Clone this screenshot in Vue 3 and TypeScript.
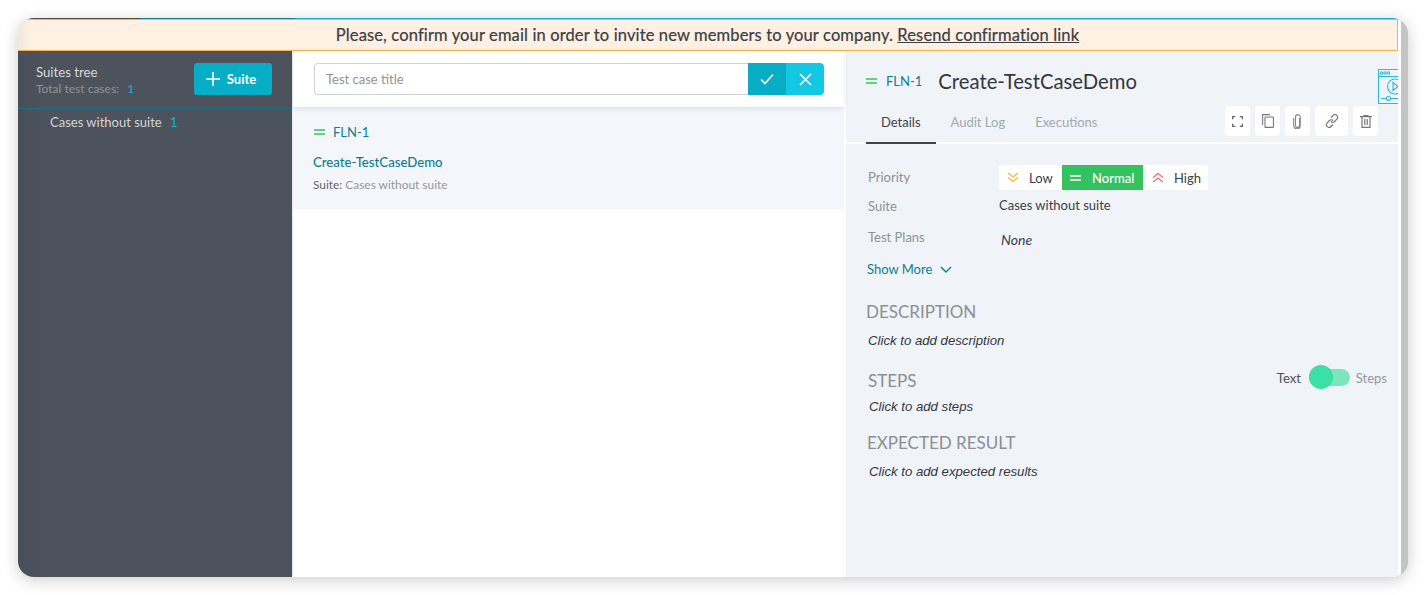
<script setup lang="ts">
const priorities = [
  { label: 'Low', cls: 'low' },
  { label: 'Normal', cls: 'normal' },
  { label: 'High', cls: 'high' },
]
const tabs = ['Details', 'Audit Log', 'Executions']
</script>

<template>
  <div class="page">
    <div class="window">
      <div class="main">
        <div class="topline"></div>
        <div class="banner">
          Please, confirm your email in order to invite new members to your company.
          <u>Resend confirmation link</u>
        </div>
        <div class="body">
          <aside class="sidebar">
            <div class="side-head">
              <div>
                <div class="side-title">Suites tree</div>
                <div class="side-total">Total test cases: <span class="cyan">1</span></div>
              </div>
              <button class="add-btn">
                <svg width="14" height="14" viewBox="0 0 14 14"><path d="M7 0v14M0 7h14" stroke="#fff" stroke-width="1.6" /></svg>
                Suite
              </button>
            </div>
            <div class="side-item">Cases without suite <span class="cyan">1</span></div>
          </aside>

          <section class="middle">
            <div class="search-bar">
              <div class="search-input">Test case title</div>
              <button class="ok">
                <svg width="14" height="12" viewBox="0 0 14 12"><path d="M1 6.5 5 10.5 13 1.5" fill="none" stroke="#fff" stroke-width="1.6" /></svg>
              </button>
              <button class="cancel">
                <svg width="13" height="13" viewBox="0 0 13 13"><path d="M1 1l11 11M12 1 1 12" stroke="#fff" stroke-width="1.7" /></svg>
              </button>
            </div>
            <div class="case-card">
              <div class="case-id">
                <svg class="eq" width="11" height="6" viewBox="0 0 11 6"><path d="M0 1h11M0 5h11" stroke="#34c759" stroke-width="1.5" /></svg>
                FLN-1
              </div>
              <div class="case-name">Create-TestCaseDemo</div>
              <div class="case-suite"><span>Suite:</span> Cases without suite</div>
            </div>
          </section>

          <section class="detail">
            <div class="detail-head">
              <svg class="eq" width="11" height="6" viewBox="0 0 11 6"><path d="M0 1h11M0 5h11" stroke="#34c759" stroke-width="1.5" /></svg>
              <span class="detail-id">FLN-1</span>
              <h1>Create-TestCaseDemo</h1>
              <svg class="tutorial" width="20" height="35" viewBox="0 0 20 35" fill="none" stroke="#2bbcd6" stroke-width="1.1">
                <path d="M20 .5H.5v34H20M.5 7.5H20" />
                <circle cx="3.5" cy="4" r="1.2" /><circle cx="7" cy="4" r="1.2" /><circle cx="10.5" cy="4" r="1.2" />
                <circle cx="17" cy="17.5" r="7.5" />
                <path d="M15 13.5v8l5-4z" />
                <path d="M3 29.5h6M12 29.5h8" /><circle cx="10.5" cy="29.5" r="2" />
              </svg>
            </div>
            <div class="tab-row">
              <div class="tabs">
                <div v-for="(t, i) in tabs" :key="t" class="tab" :class="{ active: i === 0 }">{{ t }}</div>
              </div>
              <div class="tools">
                <button class="tool w25">
                  <svg width="11" height="11" viewBox="0 0 12 12" fill="none" stroke="#666" stroke-width="1.5"><path d="M.7 3.5V.7h2.8M8.5.7h2.8v2.8M11.3 8.5v2.8H8.5M3.5 11.3H.7V8.5" /></svg>
                </button>
                <button class="tool w25">
                  <svg width="12" height="14" viewBox="0 0 12 14" fill="none" stroke="#777" stroke-width="1.1"><path d="M.6 11V.6H8" /><rect x="3" y="3" width="8.4" height="10.4" rx=".5" /></svg>
                </button>
                <button class="tool w25">
                  <svg width="9" height="15" viewBox="0 0 9 15" fill="none" stroke="#888" stroke-width="1.1"><path d="M6.5 4v7.5a2 2 0 0 1-4 0V3a2.4 2.4 0 0 1 4.8 0v8.5a3.3 3.3 0 0 1-6.6 0V4" /></svg>
                </button>
                <button class="tool w33">
                  <svg width="14" height="14" viewBox="0 0 14 14" fill="none" stroke="#777" stroke-width="1.2"><path d="M6 3.5 8 1.5a2.6 2.6 0 0 1 3.9 3.6L9.6 7.5a2.6 2.6 0 0 1-3.7 0" /><path d="M8 10.5 6 12.5a2.6 2.6 0 0 1-3.9-3.6L4.4 6.5a2.6 2.6 0 0 1 3.7 0" /></svg>
                </button>
                <button class="tool w25">
                  <svg width="12" height="13" viewBox="0 0 12 13" fill="none" stroke="#777" stroke-width="1.2"><path d="M0 1.6h12M4 1.6V.6h4v1M2 1.6v10.8h8V1.6M4.8 4v6M7.2 4v6" /></svg>
                </button>
              </div>
            </div>

            <div class="fields">
              <div class="field priority-row">
                <div class="label">Priority</div>
                <div class="prio-group">
                  <div v-for="p in priorities" :key="p.label" class="prio" :class="p.cls">
                    <svg v-if="p.cls === 'low'" width="12" height="11" viewBox="0 0 12 11" fill="none" stroke="#f5b83d" stroke-width="1.3"><path d="M1 1l5 4 5-4M1 5.5l5 4 5-4" /></svg>
                    <svg v-else-if="p.cls === 'normal'" width="11" height="6" viewBox="0 0 11 6"><path d="M0 1h11M0 5h11" stroke="#fff" stroke-width="1.5" /></svg>
                    <svg v-else width="12" height="11" viewBox="0 0 12 11" fill="none" stroke="#f76b6b" stroke-width="1.3"><path d="M1 5.5l5-4 5 4M1 10l5-4 5 4" /></svg>
                    <span>{{ p.label }}</span>
                  </div>
                </div>
              </div>
              <div class="field suite-row">
                <div class="label">Suite</div>
                <div class="value">Cases without suite</div>
              </div>
              <div class="field plans-row">
                <div class="label">Test Plans</div>
                <div class="value none">None</div>
              </div>
            </div>
            <div class="show-more">
              Show More
              <svg width="12" height="7" viewBox="0 0 12 7" fill="none" stroke="#0a7f93" stroke-width="1.4"><path d="M1 1l5 5 5-5" /></svg>
            </div>

            <h2 class="desc-h">DESCRIPTION</h2>
            <p class="hint desc-p">Click to add description</p>
            <div class="steps-head">
              <h2>STEPS</h2>
              <div class="switch-wrap">
                <span class="sw-on">Text</span>
                <span class="switch"><span class="knob"></span></span>
                <span class="sw-off">Steps</span>
              </div>
            </div>
            <p class="hint steps-p">Click to add steps</p>
            <h2 class="exp-h">EXPECTED RESULT</h2>
            <p class="hint exp-p">Click to add expected results</p>
          </section>
        </div>
      </div>
      <div class="gutter"></div>
    </div>
  </div>
</template>

<style>
html, body { margin: 0; background: #fff; }
</style>

<style scoped>
* { box-sizing: border-box; }
.page {
  width: 1426px;
  height: 595px;
  padding: 18px;
  overflow: hidden;
  font-family: Lato, "Liberation Sans", sans-serif;
}
.window {
  width: 1390px;
  height: 559px;
  display: flex;
  border-radius: 16px;
  overflow: hidden;
  box-shadow: 0 3px 16px rgba(0, 0, 0, 0.2);
  background: #c6c6c6;
}
.main {
  width: 1383px;
  display: flex;
  flex-direction: column;
  background: #fff;
  padding-right: 3px;
}
.gutter { width: 7px; background: #c4c4c4; }
.topline {
  height: 1px;
  flex: none;
  background: linear-gradient(90deg, #5a4a42 0 122px, #167f92 122px 277px, #12b5cf 277px);
}
.banner {
  height: 32px;
  flex: none;
  background: linear-gradient(90deg, #efe8de, #fef0e2 14px);
  border-top: 1px solid #f8b24b;
  border-bottom: 1.5px solid #f8b24b;
  border-right: 1.5px solid #f8b24b;
  text-align: center;
  font-size: 16.5px;
  line-height: 30px;
  color: #3a3e44;
  letter-spacing: 0.13px;
  -webkit-text-stroke: 0.2px #3a3e44;
}
.body { flex: 1; display: flex; min-height: 0; }
.sidebar {
  width: 274px;
  flex: none;
  background: linear-gradient(90deg, #484f59, #4c535d 30px);
  color: #d4d6d9;
}
.side-head {
  height: 58px;
  display: flex;
  justify-content: space-between;
  padding: 12px 20px 0 18px;
  border-bottom: 1px solid #1b6f7e;
}
.side-title { font-size: 13.2px; line-height: 18px; color: #d8dadc; }
.side-total { font-size: 12px; line-height: 16px; color: #8e939a; }
.cyan { color: #0fb6d0; margin-left: 5px; }
.add-btn {
  width: 78px;
  height: 32px;
  border: 0;
  border-radius: 3px;
  background: #06adc5;
  color: #fff;
  font: 700 13px Lato, sans-serif;
  display: flex;
  align-items: center;
  justify-content: center;
  gap: 7px;
  padding: 0 4px 0 0;
}
.side-item { padding: 4px 0 0 32px; font-size: 13px; line-height: 18px; color: #d2d4d7; }
.middle {
  width: 552px;
  flex: none;
  background: #fff;
  border-left: 1px solid #e6e9ee;
}
.search-bar {
  height: 56px;
  padding: 12px 20px 0 21px;
  display: flex;
  box-shadow: 0 2px 5px rgba(70, 90, 120, 0.14);
  position: relative;
}
.search-input {
  width: 434px;
  height: 32px;
  border: 1px solid #d0d2d4;
  border-right: 0;
  border-radius: 4px 0 0 4px;
  padding-left: 11px;
  font-size: 13px;
  line-height: 30px;
  color: #8f9398;
}
.ok, .cancel {
  height: 32px;
  width: 38px;
  border: 0;
  display: flex;
  align-items: center;
  justify-content: center;
  padding: 0;
}
.ok { background: #06adc5; }
.cancel { background: #12c8e2; border-radius: 0 4px 4px 0; }
.case-card {
  height: 102px;
  background: #f4f6fb;
  padding: 16px 20px 0;
}
.case-id {
  display: flex;
  align-items: center;
  gap: 8px;
  font-size: 13px;
  line-height: 18px;
  color: #0a7f93;
  padding-left: 1px;
}
.case-name { margin-top: 12px; font-size: 13.2px; line-height: 18px; font-weight: 500; color: #0a7f93; }
.case-suite { margin-top: 5px; font-size: 11.9px; line-height: 18px; color: #92969b; }
.case-suite span { color: #62676d; }
.detail {
  flex: 1;
  min-width: 0;
  background: #f0f3f8;
  border-left: 2px solid #fff;
  overflow: hidden;
}
.detail-head {
  height: 55px;
  display: flex;
  align-items: center;
  padding: 5px 0 0 20px;
  position: relative;
}
.detail-id { margin-left: 9px; font-size: 13px; color: #0a7f93; }
h1 { margin: 0 0 0 16px; font-size: 20.3px; font-weight: 400; color: #33383f; }
.tutorial { position: absolute; right: 0; top: 18px; }
.tab-row {
  height: 38px;
  display: flex;
  justify-content: space-between;
  border-bottom: 2px solid #fff;
  padding: 0 20px;
}
.tabs { display: flex; }
.tab {
  padding: 0 15px;
  font-size: 13px;
  line-height: 33px;
  color: #a3a9b3;
}
.tab.active { color: #3f444b; border-bottom: 2px solid #3f444b; height: 38px; }
.tools { display: flex; gap: 5px; height: 30px; }
.tool {
  height: 30px;
  border: 0;
  padding: 0;
  background: #fff;
  border-radius: 4px;
  display: flex;
  align-items: center;
  justify-content: center;
}
.w25 { width: 25px; }
.w33 { width: 33px; }
.fields { padding: 21px 0 0 22px; }
.field { display: flex; }
.label { width: 131px; font-size: 13px; line-height: 18px; color: #8e9296; }
.value { font-size: 13px; line-height: 18px; color: #3c4047; }
.priority-row { height: 25px; align-items: center; }
.priority-row .label { margin-bottom: 2px; }
.prio-group { display: flex; background: #fff; border-radius: 2px; height: 25px; overflow: hidden; }
.prio { display: flex; align-items: center; font-size: 13px; color: #3c4047; }
.prio.low { width: 63px; padding-left: 8px; gap: 10px; }
.prio.normal { width: 81px; background: #34c25f; color: #fff; padding-left: 8px; gap: 11px; font-weight: 500; }
.prio.high { width: 65px; padding-left: 9px; gap: 10px; }
.suite-row { height: 31px; }
.suite-row .label { margin-top: 7px; }
.suite-row .value { margin-top: 6px; }
.plans-row { height: 39px; }
.plans-row .label { margin-top: 7px; }
.none { font-style: italic; margin-top: 10px; padding-left: 2px; font-size: 14px; }
.show-more {
  margin: 0 0 0 21px;
  display: flex;
  align-items: center;
  gap: 8px;
  font-size: 13px;
  line-height: 18px;
  color: #0a7f93;
}
h2 { margin: 0; font-size: 17px; line-height: 22px; font-weight: 400; color: #8b8f94; }
.desc-h { margin: 23px 0 0 20px; }
.hint {
  margin: 0;
  font: italic 13.2px "Liberation Sans", Arial, sans-serif;
  line-height: 18px;
  color: #33383f;
}
.desc-p { margin: 9px 0 0 22px; }
.steps-head {
  margin: 20px 11px 0 22px;
  display: flex;
  justify-content: space-between;
  align-items: center;
  height: 22px;
}
.switch-wrap { display: flex; align-items: center; font-size: 13px; margin-bottom: 8px; }
.sw-on { color: #4d5259; margin-right: 8px; margin-top: 2px; }
.sw-off { color: #95999e; margin-left: 6px; margin-top: 2px; }
.switch {
  width: 41px;
  height: 17px;
  border-radius: 9px;
  background: #7ce5bd;
  position: relative;
  display: block;
}
.knob {
  position: absolute;
  left: 0;
  top: -4px;
  width: 24px;
  height: 24px;
  border-radius: 50%;
  background: #3ce0a6;
}
.steps-p { margin: 6px 0 0 23px; }
.exp-h { margin: 16px 0 0 21px; }
.exp-p { margin: 9px 0 0 23px; }
</style>
